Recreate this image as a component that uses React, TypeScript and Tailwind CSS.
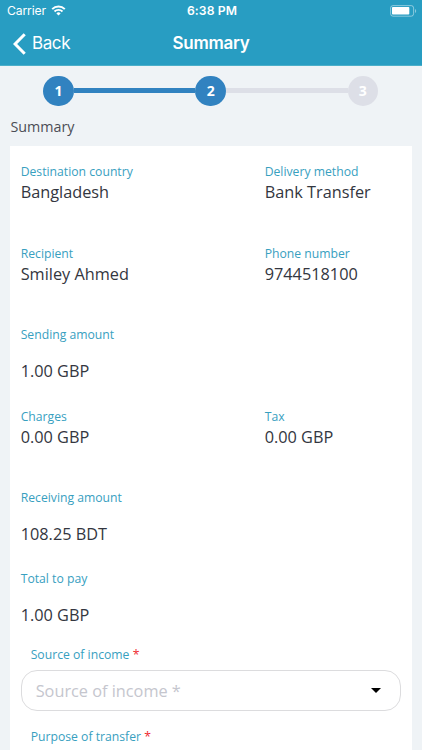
import clsx from "clsx";
import React from "react";

type Item = { label: string; value: string; spaced?: boolean };

const rows: Item[][] = [
  [
    { label: "Destination country", value: "Bangladesh" },
    { label: "Delivery method", value: "Bank Transfer" },
  ],
  [
    { label: "Recipient", value: "Smiley Ahmed" },
    { label: "Phone number", value: "9744518100" },
  ],
  [{ label: "Sending amount", value: "1.00 GBP", spaced: true }],
  [
    { label: "Charges", value: "0.00 GBP" },
    { label: "Tax", value: "0.00 GBP" },
  ],
  [{ label: "Receiving amount", value: "108.25 BDT", spaced: true }],
  [{ label: "Total to pay", value: "1.00 GBP", spaced: true }],
];

const StatusBar = () => (
  <div className="grid h-[22px] grid-cols-3 items-center pl-[7px] pr-[5px] text-[12.2px] leading-none">
    <div className="flex items-center gap-[5px]">
      <span className="tracking-[-0.15px]">Carrier</span>
      <svg width="15" height="11" viewBox="0 0 14 11" fill="none" stroke="currentColor">
        <path d="M0.7 4.1a8.9 8.9 0 0 1 12.6 0" strokeWidth="2" />
        <path d="M3 6.5a5.7 5.7 0 0 1 8 0" strokeWidth="1.9" />
        <path d="M7 10.6 4.9 8.4a3 3 0 0 1 4.2 0Z" fill="currentColor" stroke="none" />
      </svg>
    </div>
    <span className="text-center font-semibold tracking-[0.1px]">6:38 PM</span>
    <svg className="justify-self-end" width="27" height="12" viewBox="0 0 27 12" fill="none">
      <rect x="0.6" y="0.6" width="23" height="10.6" rx="2.4" stroke="#fff" strokeOpacity="0.45" />
      <rect x="2" y="2" width="17.3" height="7.6" rx="0.8" fill="#fff" />
      <path d="M25 4v4c1.6-.6 1.6-3.4 0-4Z" fill="#fff" fillOpacity="0.45" />
    </svg>
  </div>
);

const Header = () => (
  <header className="h-[66px] shrink-0 border-b border-[#4bafc9] bg-[#289dc2] font-['Inter',sans-serif] text-white">
    <StatusBar />
    <div className="grid h-[43px] grid-cols-3 items-center pl-[13px] pr-[13px]">
      <button className="flex items-center gap-[6px] text-left text-[17px] leading-none tracking-[-0.4px]">
        <svg width="13" height="22" viewBox="0 0 13 22" fill="none" stroke="currentColor" strokeWidth="3">
          <path d="M11.7 1.2 2.1 11l9.6 9.8" />
        </svg>
        Back
      </button>
      <h1 className="text-center text-[17px] font-semibold leading-none tracking-[-0.25px]">Summary</h1>
    </div>
  </header>
);

const Step = ({ value, active }: { value: number; active?: boolean }) => (
  <div
    className={clsx(
      "flex size-[30.5px] shrink-0 items-center justify-center rounded-full text-[14px] font-bold text-white",
      active ? "bg-[#3182c0]" : "bg-[#dddfe7]"
    )}
  >
    {value}
  </div>
);

const Field = ({ label, value, spaced }: Item) => (
  <div>
    <div className="text-[12.2px] leading-[18px] text-[#38a0bf]">{label}</div>
    <div className={clsx("text-[16.3px] leading-[22px] text-[#333640]", spaced && "mt-4")}>{value}</div>
  </div>
);

const FormLabel = ({ children }: { children: React.ReactNode }) => (
  <label className="block pl-[10px] text-[12.2px] leading-[18px] text-[#38a0bf]">
    {children} <span className="text-[#ee2a30]">*</span>
  </label>
);

const App = () => {
  return (
    <div className="flex h-[750px] w-[422px] flex-col overflow-hidden bg-[#eff3f6] font-['Open_Sans',sans-serif]">
      <Header />
      <div className="flex items-center pl-[43.3px] pr-[44px] pt-[9.5px]">
        <Step value={1} active />
        <div className="h-[5px] flex-1 bg-[#3182c0]" />
        <Step value={2} active />
        <div className="h-[5px] flex-1 bg-[#dddfe7]" />
        <Step value={3} />
      </div>
      <h2 className="pl-[10.5px] pt-[11px] text-[14.3px] leading-[20px] text-[#4b4d55]">Summary</h2>
      <main className="mx-[10.4px] mt-[9px] flex-1 overflow-hidden bg-white px-[10.3px] pt-[17.4px]">
        {rows.map((row) => (
          <div key={row[0].label} className="grid h-[81.4px] grid-cols-[244px_1fr]">
            {row.map((item) => (
              <Field key={item.label} {...item} />
            ))}
          </div>
        ))}
        <div className="-mt-[5.5px]">
          <FormLabel>Source of income</FormLabel>
          <button className="mb-[17px] mt-[6px] flex h-[41px] w-[380px] items-center justify-between rounded-[16px] border border-[#dcdcde] pl-[14px] pr-[19px] text-left text-[16.3px] text-[#c5c6ce]">
            Source of income *
            <svg width="10" height="5" viewBox="0 0 10 5">
              <path d="M0 0h10L5 5Z" fill="#000" />
            </svg>
          </button>
          <FormLabel>Purpose of transfer</FormLabel>
        </div>
      </main>
    </div>
  );
};

export default App;
